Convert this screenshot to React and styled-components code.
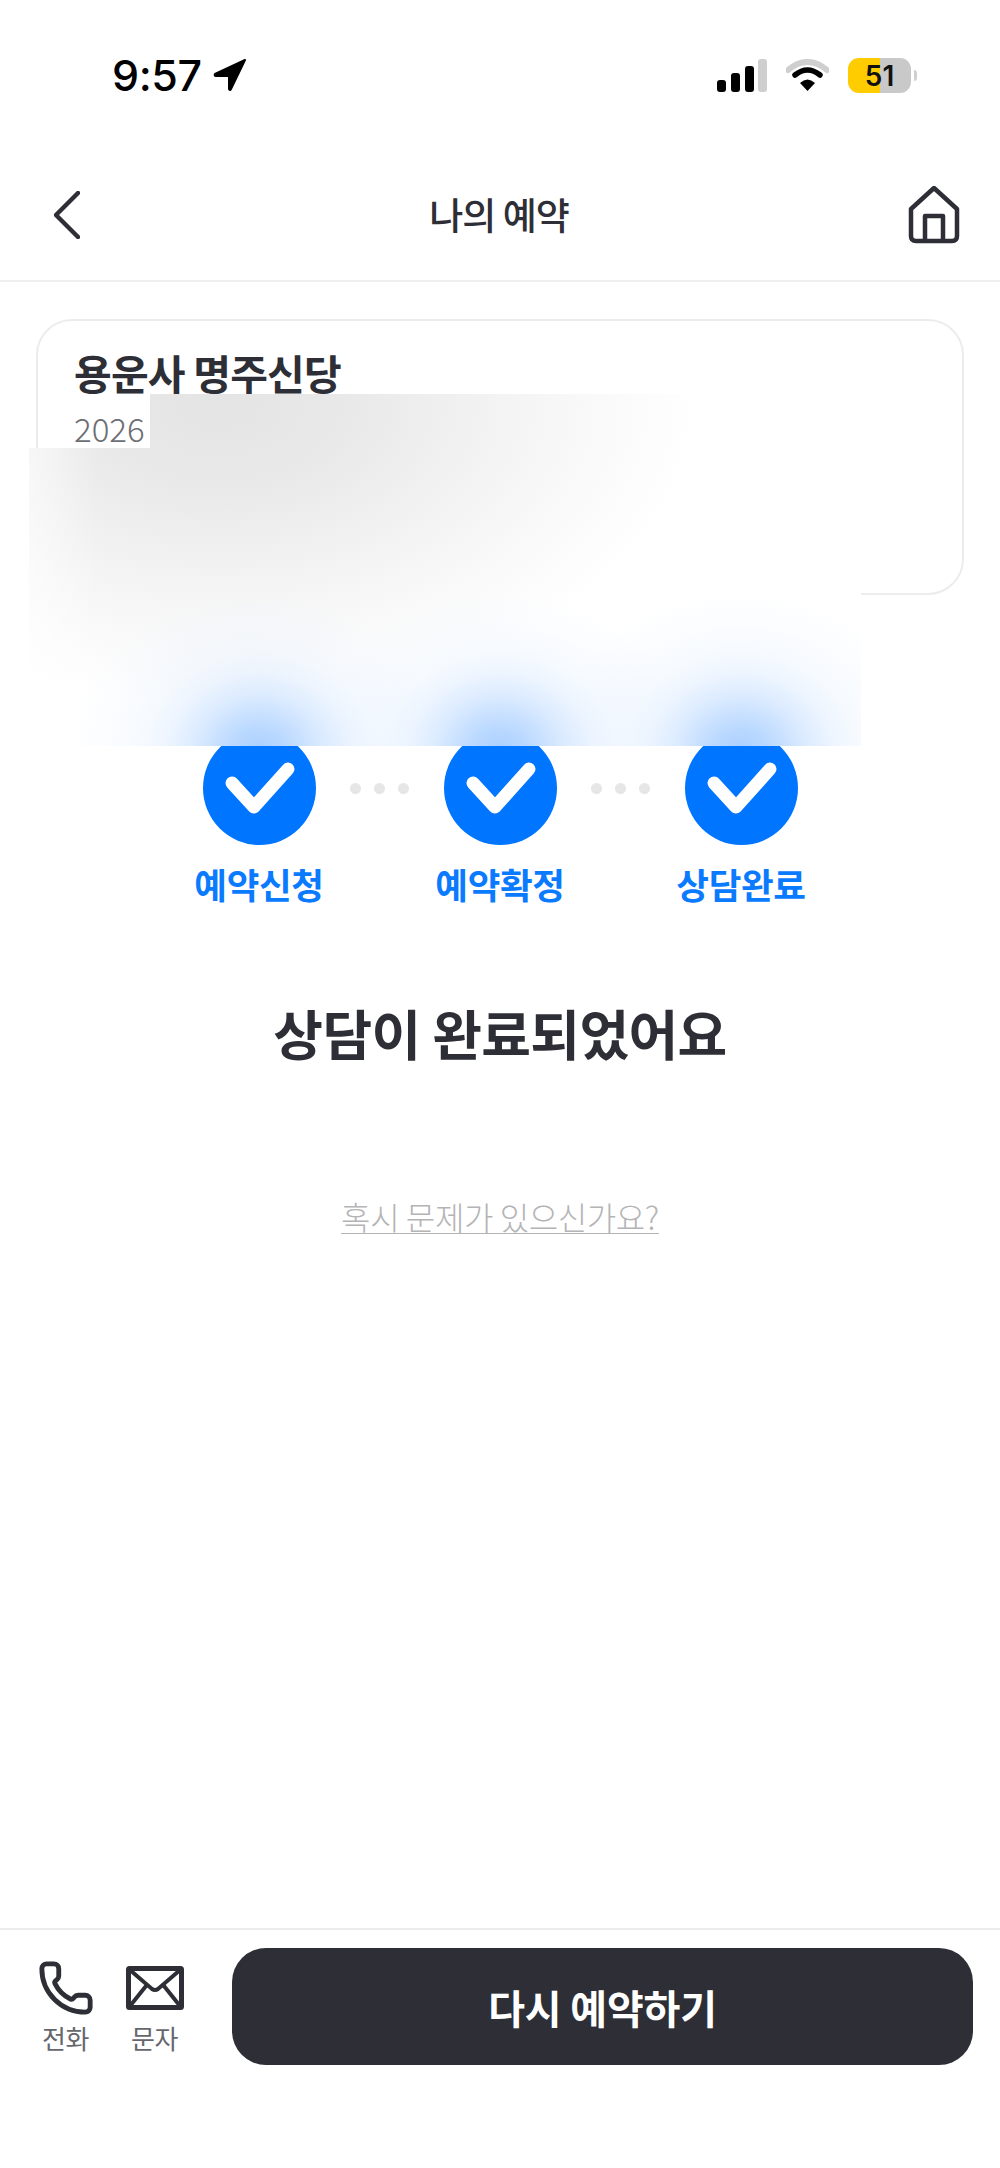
import React from 'react';
import styled, { createGlobalStyle } from 'styled-components';
import { Phone } from 'lucide-react';

const GlobalStyle = createGlobalStyle`
	html, body {
		margin: 0;
		padding: 0;
		background: #ffffff;
	}
	* {
		box-sizing: border-box;
	}
`;

const KR = `'Noto Sans CJK KR', 'Noto Sans', sans-serif`;

const Page = styled.div`
	width: 1000px;
	height: 2168px;
	position: relative;
	display: flex;
	flex-direction: column;
	overflow: hidden;
	font-family: ${KR};
	color: #2e2f36;
	background: #fff;
`;

const StatusBar = styled.div`
	height: 150px;
	padding: 58px 89px 0 112px;
	display: flex;
	justify-content: space-between;
	align-items: flex-start;
`;

const Clock = styled.div`
	display: flex;
	align-items: center;
	gap: 11px;
	height: 34px;
	font-family: Inter, sans-serif;
	font-size: 43px;
	font-weight: 500;
	letter-spacing: -0.4px;
	color: #000;
`;

const StatusIcons = styled.div`
	display: flex;
	align-items: center;
	gap: 19px;
	height: 35px;
`;

const Battery = styled.div`
	width: 63px;
	height: 35px;
	border-radius: 11px;
	display: flex;
	align-items: center;
	justify-content: center;
	position: relative;
	font-family: Inter, sans-serif;
	font-size: 28px;
	font-weight: 600;
	color: #111;
	background: linear-gradient(90deg, #ffcc00 51%, #c9c9c9 51%);
	&::after {
		content: '';
		position: absolute;
		right: -6px;
		top: 12px;
		width: 3px;
		height: 11px;
		border-radius: 0 3px 3px 0;
		background: #d0d0d0;
	}
`;

const Header = styled.header`
	height: 132px;
	padding: 0 40px 0 54px;
	display: flex;
	align-items: center;
	justify-content: space-between;
	border-bottom: 2px solid #f0f0f1;
`;

const Title = styled.h1`
	margin: 0 0 2px 10px;
	font-size: 37px;
	font-weight: 500;
	letter-spacing: -1px;
	color: #2e2f36;
`;

const Card = styled.section`
	margin: 37px 36px 0 36px;
	height: 276px;
	padding: 23px 36px;
	border: 2px solid #ececed;
	border-radius: 36px;
`;

const CardTitle = styled.h2`
	margin: 0;
	font-size: 41px;
	font-weight: 600;
	line-height: 56px;
	letter-spacing: -0.8px;
	color: #2e2f36;
`;

const CardDate = styled.div`
	margin-top: 6px;
	font-size: 33px;
	font-weight: 300;
	line-height: 44px;
	color: #6d6e74;
`;

const glow = (x) => `
	radial-gradient(ellipse 115px 100px at ${x}px 358px, #a9cfff 0%, rgba(169, 207, 255, 0.72) 25%, rgba(169, 207, 255, 0.3) 55%, rgba(169, 207, 255, 0.08) 80%, rgba(169, 207, 255, 0) 100%),
	radial-gradient(ellipse 190px 160px at ${x}px 358px, rgba(225, 238, 255, 0.75) 0%, rgba(225, 238, 255, 0.35) 55%, rgba(225, 238, 255, 0) 100%)
`;

const Censor = styled.div`
	position: absolute;
	left: 29px;
	top: 394px;
	width: 832px;
	height: 352px;
	clip-path: polygon(121px 0, 100% 0, 100% 100%, 0 100%, 0 54px, 121px 54px);
	background:
		${glow(230)},
		${glow(471)},
		${glow(712)},
		linear-gradient(90deg, rgba(255, 255, 255, 0.55) 0%, rgba(255, 255, 255, 0) 70px),
		radial-gradient(ellipse 480px 300px at 190px 10px, #e4e4e4 0%, #e9e9e9 28%, #f1f1f1 52%, #f8f8f8 74%, rgba(253, 253, 253, 0) 100%),
		#ffffff;
`;

const Steps = styled.div`
	margin-top: 136px;
	display: flex;
	justify-content: center;
	align-items: flex-start;
`;

const Step = styled.div`
	width: 140px;
	display: flex;
	flex-direction: column;
	align-items: center;
	gap: 14px;
`;

const StepCircle = styled.div`
	width: 113px;
	height: 114px;
	border-radius: 50%;
	background: #0075ff;
	display: flex;
	align-items: center;
	justify-content: center;
`;

const StepLabel = styled.div`
	font-size: 35.5px;
	font-weight: 700;
	line-height: 50px;
	letter-spacing: -0.3px;
	color: #0a7bff;
	white-space: nowrap;
`;

const Dots = styled.div`
	width: 101px;
	height: 114px;
	display: flex;
	align-items: center;
	justify-content: center;
	gap: 13px;
`;

const Dot = styled.span`
	width: 11px;
	height: 11px;
	border-radius: 50%;
	background: #e6e6e7;
`;

const Heading = styled.h2`
	margin: 85px 0 0;
	text-align: center;
	font-size: 54px;
	font-weight: 600;
	line-height: 78px;
	letter-spacing: -0.6px;
	color: #2e2f36;
`;

const HelpLink = styled.a`
	margin-top: 123px;
	align-self: center;
	font-size: 32px;
	line-height: 42px;
	font-weight: 300;
	letter-spacing: -0.4px;
	color: #b4b4b6;
	text-decoration: underline;
	text-decoration-thickness: 1px;
	text-underline-offset: 3px;
`;

const BottomBar = styled.footer`
	margin-top: auto;
	height: 240px;
	padding: 18px 27px 0 0;
	display: flex;
	align-items: flex-start;
	border-top: 2px solid #ececed;
`;

const ContactGroup = styled.div`
	width: 232px;
	padding: 11px 0 0 33px;
	display: flex;
	gap: 24px;
`;

const Contact = styled.div`
	width: 65px;
	display: flex;
	flex-direction: column;
	align-items: center;
`;

const ContactIcon = styled.div`
	height: 58px;
	display: flex;
	align-items: center;
	justify-content: center;
`;

const ContactLabel = styled.span`
	margin-top: 2px;
	font-size: 26px;
	line-height: 37px;
	letter-spacing: -0.3px;
	color: #66676d;
`;

const ReserveButton = styled.button`
	flex: 1;
	height: 117px;
	border: none;
	border-radius: 34px;
	background: #2e2f36;
	color: #fff;
	font-family: ${KR};
	font-size: 40px;
	font-weight: 600;
	letter-spacing: -0.2px;
`;

const CheckMark = () => (
	<svg width='113' height='114' viewBox='0 0 113 114'>
		<path
			d='M29 52 L51 76 L85 38'
			fill='none'
			stroke='#fff'
			strokeWidth='13'
			strokeLinecap='round'
			strokeLinejoin='round'
		/>
	</svg>
);

const steps = ['예약신청', '예약확정', '상담완료'];

const App = () => (
	<Page>
		<GlobalStyle />
		<StatusBar>
			<Clock>
				9:57
				<svg width='34' height='34' viewBox='0 0 34 34'>
					<path d='M32 2 L2 16 Q1 18 3 18 L16 18 L16 31 Q17 33 18 31 Z' fill='#000' stroke='#000' strokeWidth='2' strokeLinejoin='round' />
				</svg>
			</Clock>
			<StatusIcons>
				<svg width='50' height='33' viewBox='0 0 50 33'>
					<rect x='0' y='21' width='9' height='12' rx='3' fill='#000' />
					<rect x='14' y='14' width='9' height='19' rx='3' fill='#000' />
					<rect x='28' y='7' width='9' height='26' rx='3' fill='#000' />
					<rect x='41' y='0' width='9' height='33' rx='3' fill='#cfcfcf' />
				</svg>
				<svg width='43' height='33' viewBox='0 0 43 33'>
					<path d='M2 11 Q21.5 -5 41 11' fill='none' stroke='#cfcfcf' strokeWidth='6' strokeLinecap='round' />
					<path d='M9 16 Q21.5 6 34 16' fill='none' stroke='#000' strokeWidth='5.5' strokeLinecap='round' />
					<path d='M14 24 L21.5 32 L29 24 Q21.5 17 14 24 Z' fill='#000' />
				</svg>
				<Battery>51</Battery>
			</StatusIcons>
		</StatusBar>
		<Header>
			<svg width='26' height='48' viewBox='0 0 26 48'>
				<path d='M24 2 L2 24 L24 46' fill='none' stroke='#2e2f36' strokeWidth='4.5' strokeLinecap='round' strokeLinejoin='round' />
			</svg>
			<Title>나의 예약</Title>
			<svg width='52' height='58' viewBox='0 0 52 58'>
				<path
					d='M26 2 L49 23 L49 50 Q49 55 44 55 L8 55 Q3 55 3 50 L3 23 Z'
					fill='none'
					stroke='#2e2f36'
					strokeWidth='4.5'
					strokeLinejoin='round'
				/>
				<path d='M17 55 L17 30 L35 30 L35 55' fill='none' stroke='#2e2f36' strokeWidth='4.5' strokeLinejoin='round' />
			</svg>
		</Header>
		<Card>
			<CardTitle>용운사 명주신당</CardTitle>
			<CardDate>2026</CardDate>
		</Card>
		<Censor />
		<Steps>
			{steps.map((label, i) => (
				<React.Fragment key={label}>
					{i > 0 && (
						<Dots>
							<Dot />
							<Dot />
							<Dot />
						</Dots>
					)}
					<Step>
						<StepCircle>
							<CheckMark />
						</StepCircle>
						<StepLabel>{label}</StepLabel>
					</Step>
				</React.Fragment>
			))}
		</Steps>
		<Heading>상담이 완료되었어요</Heading>
		<HelpLink>혹시 문제가 있으신가요?</HelpLink>
		<BottomBar>
			<ContactGroup>
				<Contact>
					<ContactIcon>
						<Phone size={58} strokeWidth={2} color='#2e2f36' />
					</ContactIcon>
					<ContactLabel>전화</ContactLabel>
				</Contact>
				<Contact>
					<ContactIcon>
						<svg width='58' height='44' viewBox='0 0 58 44'>
							<rect x='2.5' y='2.5' width='53' height='39' rx='1' fill='none' stroke='#2e2f36' strokeWidth='5' />
							<path d='M4 4 L26 23 Q29 25 32 23 L54 4 M4 40 L20 20 M54 40 L38 20' fill='none' stroke='#2e2f36' strokeWidth='4' />
						</svg>
					</ContactIcon>
					<ContactLabel>문자</ContactLabel>
				</Contact>
			</ContactGroup>
			<ReserveButton>다시 예약하기</ReserveButton>
		</BottomBar>
	</Page>
);

export default App;
